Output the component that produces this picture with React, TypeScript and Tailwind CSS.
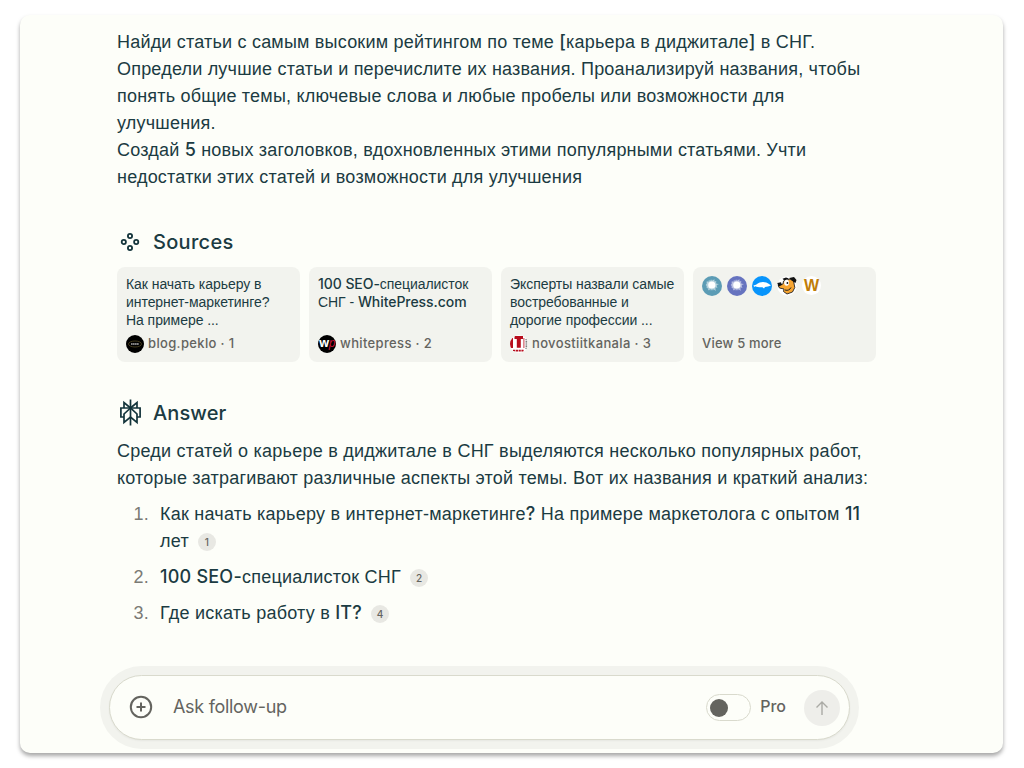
import type { ReactNode } from "react";

interface Source {
  lines: ReactNode[];
  site: string;
  index: number;
  icon: ReactNode;
}

const DotsIcon = () => (
  <svg className="w-5 h-5 -mt-px" viewBox="0 0 20 20" fill="none" stroke="#13343b" strokeWidth="1.8">
    <circle cx="10" cy="4" r="2.1" />
    <circle cx="10" cy="16" r="2.1" />
    <circle cx="3.8" cy="10" r="2.1" />
    <circle cx="16.2" cy="10" r="2.1" />
  </svg>
);

const AnswerIcon = () => (
  <svg className="w-[22px] h-[27px] -mt-[2px]" viewBox="0 0 22 27" fill="none" stroke="#13343b" strokeWidth="1.7">
    <path d="M10.5 0.5V26.5" />
    <path d="M10.5 9L4 3.5V9M10.5 9L17 3.5V9" />
    <path d="M4 18H0.9V9H20.1V18H17" />
    <path d="M10.5 9L4 15V23.5L10.5 18L17 23.5V15L10.5 9Z" />
  </svg>
);

const PekloIcon = () => (
  <svg className="w-[18px] h-[18px]" viewBox="0 0 18 18">
    <circle cx="9" cy="9" r="9" fill="#000" />
    <ellipse cx="9" cy="9" rx="6.5" ry="3" fill="none" stroke="#5d5128" strokeWidth="0.7" />
    <path d="M5 9H13" stroke="#aaa" strokeWidth="1.6" strokeDasharray="1.7 0.3" />
  </svg>
);

const WhitepressIcon = () => (
  <div className="w-[18px] h-[18px] rounded-full bg-black overflow-hidden flex items-center justify-center font-['Open_Sans'] text-[12px] leading-[12px] tracking-[-0.5px] font-bold">
    <span className="text-white -mt-[3px]">w</span>
    <span className="text-[#d0143c] italic font-normal -mt-[3px]">p</span>
  </div>
);

const NovostiIcon = () => (
  <svg className="w-[18px] h-[18px] rounded-full" viewBox="0 0 18 18">
    <rect width="18" height="18" fill="#fff" />
    <path d="M0 3H3V13H0ZM4.5 1H13V4H10.8V12.8H6.8V4H4.5Z" fill="#b70d1c" />
    <path d="M13.9 3V13" stroke="#b70d1c" strokeWidth="0.8" />
    <path d="M16.4 4V15" stroke="#555" strokeWidth="1.7" strokeDasharray="1.2 1" />
    <path d="M3 15.7H14" stroke="#b70d1c" strokeWidth="1.8" strokeDasharray="2.2 0.6" />
  </svg>
);

const BurstIcon = ({ color }: { color: string }) => (
  <svg className="w-5 h-5" viewBox="0 0 20 20">
    <circle cx="10" cy="10" r="10" fill={color} />
    <circle cx="9.5" cy="9" r="5.5" fill="#fff" opacity="0.2" />
    <path
      d="M9 3.5L10 5L12.5 3L12.3 5.5L14.5 5L13.5 7.5L17 8L14.5 9.5L15.5 12L13 11.3L14 15L11 13L10 14L8.5 13L6 14.5L6.5 12L4.5 11.8L5 10L3.5 9L5 7.8L4.5 5.5L7 5.8L7.5 4.5L8.7 5Z"
      fill="#fff"
      opacity="0.45"
    />
    <circle cx="9.8" cy="9" r="3.6" fill="#fff" />
  </svg>
);

const WhaleIcon = () => (
  <svg className="w-5 h-5" viewBox="0 0 20 20">
    <circle cx="10" cy="10" r="10" fill="#0894fb" />
    <path d="M1 9C3 9.5 4 9 5 8C8 5.2 14 5.2 17 8L19 9.6L16 10.5L13 11L12 12.4L10.5 11.3C7 11.5 5 11 3.5 10.3L1.5 11.2L2.2 10Z" fill="#fff" />
  </svg>
);

const DogIcon = () => (
  <svg className="w-5 h-5" viewBox="0 0 20 20">
    <circle cx="10" cy="10" r="9.7" fill="#fff" />
    <path d="M6.5 5L13 3L16.5 5L17.8 11.5L15.5 16L10 18L6.5 15.5L7 13L2.5 12L1.2 9.5L6 8Z" fill="#f7a531" stroke="#222" strokeWidth="0.9" />
    <path d="M5.5 2.8L9 1.5L12 2.5L7.5 4.8ZM12 2L17 1L19.5 4L18.5 7L16 5.5ZM0.3 7L4 6.3L5 9L1.5 10.5Z" fill="#111" />
    <ellipse cx="9.6" cy="6.8" rx="2.4" ry="3" fill="#fff" />
    <circle cx="10.4" cy="7" r="0.9" fill="#111" />
    <path d="M8 14C11 15 13 13.5 14 11.5" fill="none" stroke="#222" />
  </svg>
);

const GoldIcon = () => (
  <div className="w-[19px] h-[19px] rounded-full bg-white flex items-center justify-center font-['Liberation_Sans'] text-[16px] leading-[19px] font-bold text-[#c07d09]">
    W
  </div>
);

const Latin = ({ children }: { children: ReactNode }) => (
  <span className="font-['Inter'] font-medium leading-[0]">{children}</span>
);

const sources: Source[] = [
  {
    lines: ["Как начать карьеру в", "интернет-маркетинге?", "На примере ..."],
    site: "blog.peklo",
    index: 1,
    icon: <PekloIcon />,
  },
  {
    lines: [<><Latin>100 SEO-</Latin>специалисток</>, <>СНГ - <Latin>WhitePress.com</Latin></>],
    site: "whitepress",
    index: 2,
    icon: <WhitepressIcon />,
  },
  {
    lines: ["Эксперты назвали самые", "востребованные и", "дорогие профессии ..."],
    site: "novostiitkanala",
    index: 3,
    icon: <NovostiIcon />,
  },
];

const Lines = ({ lines }: { lines: ReactNode[] }) => (
  <>
    {lines.map((line, i) => (
      <span key={i} className="block whitespace-nowrap">{line}</span>
    ))}
  </>
);

const SourceCard = ({ source }: { source: Source }) => (
  <div className="w-[183px] h-[95px] rounded-lg bg-[#f2f3ee] px-[9px] pt-2 pb-[9px] flex flex-col justify-between">
    <p className="text-[14px] leading-[18px] tracking-[-0.06px]">
      <Lines lines={source.lines} />
    </p>
    <div className="flex items-center gap-1 h-[18px] font-['Inter'] text-[13px] font-medium tracking-[0.35px] text-[#64645f] whitespace-nowrap">
      {source.icon}
      <span className="-mt-px">{source.site} · {source.index}</span>
    </div>
  </div>
);

const Cite = ({ n }: { n: number }) => (
  <span className="inline-flex items-center justify-center ml-[9px] w-[18px] h-[18px] rounded-full bg-[#e8e8e3] font-['Inter'] text-[10px] leading-[18px] font-medium tracking-normal text-[#64645f] align-middle">
    {n}
  </span>
);

const Item = ({ n, children }: { n: number; children: ReactNode }) => (
  <li className="flex">
    <span className="w-[43px] pr-[11px] text-right shrink-0 text-[#7a7a75]">{n}.</span>
    <div className="whitespace-nowrap">{children}</div>
  </li>
);

export default function App() {
  return (
    <div className="w-[1024px] h-[768px] bg-white pt-[15px] pl-5 overflow-hidden font-['Liberation_Sans',sans-serif] text-[#1b3b42]">
      <div className="w-[983px] h-[738px] rounded-[10px] bg-[#fdfef9] shadow-[0_3px_4px_rgba(0,0,0,0.35)] pt-[14px] pl-[97px]">
        <p className="text-[18px] leading-[27px] tracking-[0.2px]">
          <Lines
            lines={[
              <>Найди статьи с самым высоким рейтингом по теме <Latin>[</Latin>карьера в диджитале<Latin>]</Latin> в СНГ.</>,
              "Определи лучшие статьи и перечислите их названия. Проанализируй названия, чтобы",
              "понять общие темы, ключевые слова и любые пробелы или возможности для",
              "улучшения.",
              <>Создай <Latin>5</Latin> новых заголовков, вдохновленных этими популярными статьями. Учти</>,
              "недостатки этих статей и возможности для улучшения",
            ]}
          />
        </p>

        <div className="flex items-center gap-[13px] mt-[37px] pl-[3px] h-[28px]">
          <DotsIcon />
          <h2 className="font-['Inter'] text-[20px] font-medium tracking-[0.3px]">Sources</h2>
        </div>
        <div className="flex gap-[9px] mt-[11px]">
          {sources.map((source) => (
            <SourceCard key={source.index} source={source} />
          ))}
          <div className="w-[183px] h-[95px] rounded-lg bg-[#f2f3ee] px-[9px] pt-[9px] pb-[10px] flex flex-col justify-between">
            <div className="flex gap-[5px]">
              <BurstIcon color="#5c9cb5" />
              <BurstIcon color="#6673bf" />
              <WhaleIcon />
              <DogIcon />
              <GoldIcon />
            </div>
            <span className="font-['Inter'] text-[13px] leading-[18px] font-medium tracking-[0.2px] text-[#64645f]">View 5 more</span>
          </div>
        </div>

        <div className="flex items-center gap-[11px] mt-[37px] pl-[3px] h-[28px]">
          <AnswerIcon />
          <h2 className="font-['Inter'] text-[20px] font-medium tracking-[0.1px]">Answer</h2>
        </div>
        <div className="mt-[11px] text-[18px] leading-[27px]">
          <p className="tracking-[0.24px] whitespace-nowrap">
            Среди статей о карьере в диджитале в СНГ выделяются несколько популярных работ,
          </p>
          <p className="tracking-[0.2px] whitespace-nowrap">
            которые затрагивают различные аспекты этой темы. Вот их названия и краткий анализ:
          </p>
        </div>
        <ol className="mt-[9px] flex flex-col gap-[9px] text-[18px] leading-[27px] tracking-[0.23px]">
          <Item n={1}>
            Как начать карьеру в интернет-маркетинге<Latin>?</Latin> На примере маркетолога с опытом <Latin>11</Latin>
            <br />
            лет<Cite n={1} />
          </Item>
          <Item n={2}><Latin>100 SEO-</Latin>специалисток СНГ<Cite n={2} /></Item>
          <Item n={3}>Где искать работу в <Latin>IT?</Latin><Cite n={4} /></Item>
        </ol>

        <div className="-ml-[17px] mt-[39px] w-[759px] h-[83px] rounded-full bg-[#f2f3ee] p-[9px]">
          <div className="flex items-center h-[65px] rounded-full border border-[#d9dacd] bg-[#fdfef9] shadow-xs pl-[19px] pr-[9px] font-['Inter']">
            <svg className="w-6 h-6 -mt-px" viewBox="0 0 24 24" fill="none" stroke="#64645f" strokeWidth="2">
              <circle cx="12" cy="12" r="10.2" />
              <path d="M12 7.5V16.5M7.5 12H16.5" />
            </svg>
            <span className="ml-5 -mt-[2px] text-[18px] tracking-[-0.3px] text-[#64645f]">Ask follow-up</span>
            <div className="ml-auto w-[45px] h-[27px] rounded-full border border-[#d9dacd] flex items-center pl-[3px]">
              <div className="w-[18px] h-[18px] rounded-full bg-[#64645f]" />
            </div>
            <span className="ml-[9px] -mt-[3px] text-[16px] font-medium text-[#64645f]">Pro</span>
            <div className="ml-[18px] w-9 h-9 rounded-full bg-[#eeeeea] flex items-center justify-center">
              <svg className="w-[14px] h-[16px]" viewBox="0 0 14 16" fill="none" stroke="#aaaaa5" strokeWidth="1.4">
                <path d="M7 15V2M1.5 7.5L7 2L12.5 7.5" />
              </svg>
            </div>
          </div>
        </div>
      </div>
    </div>
  );
}
